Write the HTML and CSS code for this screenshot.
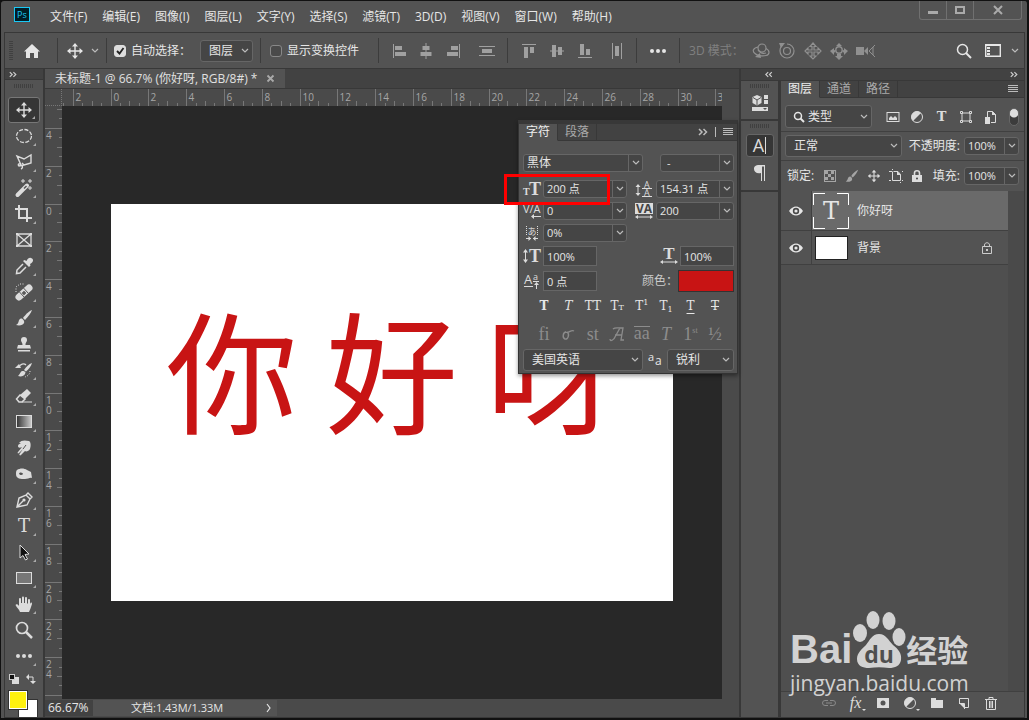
FILE: index.html
```
<!DOCTYPE html>
<html lang="zh-CN">
<head>
    <meta charset="UTF-8"/>
    <meta name="viewport" content="width=device-width,initial-scale=1"/>
    <title>未标题-1 @ 66.7%</title>
    <link rel="stylesheet" href="styles.css">
</head>
<body>
<svg class="defs" width="0" height="0" aria-hidden="true">
    <symbol id="move" viewBox="0 0 18 18"><path d="M9 3v12M3 9h12" fill="none" stroke="currentColor" stroke-width="1.4"/><path d="M9 1l3 3.500H6zM9 17l3-3.500H6zM1 9l3.500-3v6zM17 9l-3.500-3v6z"/></symbol>
    <symbol id="chev" viewBox="0 0 8 6"><path d="M1 1l3 3 3-3" fill="none" stroke="currentColor" stroke-width="1.200"/></symbol>
    <symbol id="eye" viewBox="0 0 14 10"><path d="M0 5c4-6 10-6 14 0-4 6-10 6-14 0z"/><circle cx="7" cy="5" r="3.200" fill="#484848"/><circle cx="7" cy="5" r="1.600"/></symbol>
    <symbol id="burger" viewBox="0 0 10 8"><path d="M0 .5h10M0 2.500h10M0 4.500h10M0 6.500h10" stroke="currentColor" fill="none"/></symbol>
    <symbol id="more" viewBox="0 0 18 6"><circle cx="3" cy="3" r="2"/><circle cx="9" cy="3" r="2"/><circle cx="15" cy="3" r="2"/></symbol>
    <symbol id="right2" viewBox="0 0 10 8"><path d="M1 1l3 3-3 3M5.500 1l3 3-3 3" fill="none" stroke="currentColor" stroke-width="1.500"/></symbol>
    <symbol id="left2" viewBox="0 0 10 8"><path d="M4 1L1 4l3 3M8.500 1l-3 3 3 3" fill="none" stroke="currentColor" stroke-width="1.500"/></symbol>
    <symbol id="half" viewBox="0 0 14 14"><circle cx="7" cy="7" r="5.500" fill="none" stroke="currentColor"/><path d="M11 3A5.600 5.600 0 0 0 3 11z"/></symbol>
</svg>

<div class="app">
    <header class="menubar">
        <svg class="logo" width="16" height="15" viewBox="0 0 16 15"><rect x=".5" y=".5" width="15" height="14" fill="#001d26" stroke="#1ac8f5"/><text x="3" y="11" font-size="9" fill="#1ac8f5">Ps</text></svg>
        <nav class="menu">
            <button>文件(F)</button>
            <button>编辑(E)</button>
            <button>图像(I)</button>
            <button>图层(L)</button>
            <button>文字(Y)</button>
            <button>选择(S)</button>
            <button>滤镜(T)</button>
            <button>3D(D)</button>
            <button>视图(V)</button>
            <button>窗口(W)</button>
            <button>帮助(H)</button>
        </nav>
        <div class="winbtns">
            <button aria-label="最小化"><svg width="10" height="10" viewBox="0 0 10 10"><path d="M0 6h10v3H0z"/></svg></button>
            <button aria-label="最大化"><svg width="10" height="10" viewBox="0 0 10 10"><path d="M1 2h8v6H1z" fill="none" stroke="currentColor" stroke-width="2"/></svg></button>
            <button class="wide" aria-label="关闭"><svg width="10" height="10" viewBox="0 0 10 10"><path d="M1 1l8 8M9 1L1 9" stroke="currentColor" stroke-width="2"/></svg></button>
        </div>
    </header>

    <div class="options">
        <span class="grip-v"></span>
        <button class="home" aria-label="主页"><svg width="16" height="14" viewBox="0 0 16 14"><path d="M8 0l8 7.500h-2V14h-4V9H6v5H2V7.500H0z"/></svg></button>
        <span class="sep"></span>
        <button class="tool-pick" aria-label="移动工具"><svg width="18" height="18"><use href="#move"/></svg><svg width="8" height="6"><use href="#chev"/></svg></button>
        <span class="sep"></span>
        <label class="check"><input type="checkbox" checked>自动选择：</label>
        <select class="sel sel-auto" aria-label="自动选择对象"><option>图层</option></select>
        <span class="sep"></span>
        <label class="check check-show"><input type="checkbox">显示变换控件</label>
        <span class="sep"></span>
        <div class="align">
            <button aria-label="左对齐"><svg width="14" height="16" viewBox="0 0 14 16"><path d="M0 1h1v14H0zM2 3h7v4H2zM2 9h11v4H2z"/></svg></button>
            <button aria-label="水平居中"><svg width="12" height="16" viewBox="0 0 12 16"><path d="M5.500 0h1v16h-1zM2.500 3h7v4h-7zM.5 9h11v4H.5z"/></svg></button>
            <button aria-label="右对齐"><svg width="14" height="16" viewBox="0 0 14 16"><path d="M13 1h1v14h-1zM5 3h7v4H5zM1 9h11v4H1z"/></svg></button>
            <button class="dist" aria-label="垂直分布"><svg width="16" height="12" viewBox="0 0 16 12"><path d="M0 1h16v1H0zM0 10h16v1H0zM3 4h10v4H3z"/></svg></button>
        </div>
        <span class="sep"></span>
        <div class="align align-v">
            <button aria-label="顶对齐"><svg width="14" height="14" viewBox="0 0 14 14"><path d="M0 0h14v1H0zM2 3h4v11H2zM8 3h4v6H8z"/></svg></button>
            <button aria-label="垂直居中"><svg width="14" height="14" viewBox="0 0 14 14"><path d="M0 6.500h14v1H0zM2 1h4v12H2zM8 3h4v8H8z"/></svg></button>
            <button aria-label="底对齐"><svg width="14" height="14" viewBox="0 0 14 14"><path d="M0 13h14v1H0zM2 0h4v11H2zM8 5h4v6H8z"/></svg></button>
            <button class="dist" aria-label="水平分布"><svg width="10" height="16" viewBox="0 0 10 16"><path d="M0 0h1v16H0zM9 0h1v16H9zM3 3h4v10H3z"/></svg></button>
        </div>
        <span class="sep"></span>
        <button class="more" aria-label="更多"><svg width="18" height="6"><use href="#more"/></svg></button>
        <span class="sep"></span>
        <span class="mode3d">3D 模式：</span>
        <div class="icons3d">
            <button disabled aria-label="环绕"><svg width="18" height="16" viewBox="0 0 18 16"><g fill="none" stroke="currentColor" stroke-width="1.200"><circle cx="10" cy="5" r="4"/><path d="M6 4C1 5 0 8 3 10.500c2 2 7 3 11 2 4-1 4-5 0-7M6 7c2 3 5 4 8 3"/></g><path d="M8 10l-5 4 6 1z"/></svg></button>
            <button disabled aria-label="滚动"><svg width="18" height="18" viewBox="0 0 18 18"><g fill="none" stroke="currentColor" stroke-width="1.200"><circle cx="9" cy="9" r="3.500"/><path d="M9 2a7 7 0 1 1-7 7c0-3 1-5 3-6"/></g><path d="M1 1h6L3 6z"/></svg></button>
            <button disabled aria-label="平移"><svg width="18" height="18" viewBox="0 0 18 18"><path d="M9 1l3 3.500h-2v3.500h4V6l3 3-3 3v-2h-4v4h2l-3 3-3-3h2v-4H4v2L1 9l3-3v2h4V4.500H6z" fill="none" stroke="currentColor" stroke-width="1.200"/></svg></button>
            <button disabled aria-label="滑动"><svg width="18" height="18" viewBox="0 0 18 18"><circle cx="9" cy="8" r="3.200" fill="none" stroke="currentColor" stroke-width="1.400"/><path d="M9 1l3 3H6zM0 9l4-3v2l2 .5-2 2.500v2zM18 9l-4-3v2l-2 .5 2 2.500v2zM7 12h4v2h2l-4 4-4-4h2z"/></svg></button>
            <button disabled aria-label="缩放"><svg width="20" height="14" viewBox="0 0 20 14"><path d="M0 3h8v8H0zM8 7l4-4v8z"/><path d="M19 1l-6 6 6 6M17 3v8" fill="none" stroke="currentColor"/></svg></button>
        </div>
        <div class="opt-right">
            <button aria-label="搜索"><svg width="16" height="16" viewBox="0 0 16 16"><circle cx="6.500" cy="6.500" r="5" fill="none" stroke="currentColor" stroke-width="1.500"/><path d="M10 10l5 5" stroke="currentColor" stroke-width="2"/></svg></button>
            <button aria-label="工作区"><svg width="16" height="13" viewBox="0 0 16 13"><path d="M.7.7h14.600v11.600H.7z" fill="none" stroke="currentColor" stroke-width="1.400"/><path d="M1 0h14v2H1zM2 3h3v2H2zM2 6h3v2H2zM2 9h3v2H2z"/></svg></button>
            <button class="ws-arrow" aria-label="工作区菜单"><svg width="8" height="6"><use href="#chev"/></svg></button>
        </div>
    </div>

    <main class="workspace">
        <aside class="toolbar">
            <div class="strip"><svg width="8" height="7"><use href="#right2"/></svg></div>
            <span class="grip"></span>
            <div class="tools">
                <button class="tool active" aria-label="移动"><svg viewBox="0 0 18 18"><use href="#move"/></svg></button>
                <button class="tool" aria-label="椭圆选框"><svg viewBox="0 0 18 18"><ellipse cx="9" cy="9" rx="7.500" ry="6.500" fill="none" stroke="currentColor" stroke-width="1.300" stroke-dasharray="4 1.500"/></svg></button>
                <button class="tool" aria-label="套索"><svg viewBox="0 0 18 18"><path d="M6 12L2 3l7 3 7-4v8l-7 2-5 1c-2-2 1-3 2-1 2 1 2 3 0 4M9 12l-2-2" fill="none" stroke="currentColor" stroke-width="1.400"/></svg></button>
                <button class="tool" aria-label="魔棒"><svg viewBox="0 0 18 18"><path d="M2.500 16L12 6.500" stroke="currentColor" stroke-width="4" stroke-linecap="round"/><path d="M9 9.500l2.500-2.500" stroke="#535353" stroke-width="1.500"/><path d="M8 0v4M6 2h4M15 0v4M13 2h4M15 7v4M13 9h4" stroke="currentColor" stroke-width="1"/></svg></button>
                <button class="tool" aria-label="裁剪"><svg viewBox="0 0 18 18"><path d="M4 0v13h13M0 4h12v13" fill="none" stroke="currentColor" stroke-width="2"/></svg></button>
                <button class="tool plain" aria-label="图框"><svg viewBox="0 0 18 18"><path d="M2 3h14v12H2zM2 3l14 12M16 3L2 15" fill="none" stroke="currentColor" stroke-width="1.300"/><path d="M1 2h2v2H1zM15 2h2v2h-2zM1 14h2v2H1zM15 14h2v2h-2z"/></svg></button>
                <button class="tool" aria-label="吸管"><svg viewBox="0 0 18 18"><path d="M8 7L2 13l-.5 3.500L5 16l6-6" fill="none" stroke="currentColor" stroke-width="1.500"/><path d="M8 4l1.500-1 2 1C13 1 15 0 17 1.500s1 4-2 5.500l.5 1.500L14 10z"/></svg></button>
                <button class="tool" aria-label="修复画笔"><svg viewBox="0 0 18 18"><path d="M4 14L14 5" stroke="currentColor" stroke-width="7" stroke-linecap="round"/><path d="M4.500 9l5 5.500M8.500 5l5 5.500" stroke="#535353"/><path d="M9 8v4M7 10h4" stroke="#535353" stroke-width="1.500"/><path d="M1 9V4l4-3h4" fill="none" stroke="currentColor" stroke-dasharray="1 1.500"/></svg></button>
                <button class="tool" aria-label="画笔"><svg viewBox="0 0 18 18"><path d="M17 1c-3 1-7 5-9 8l2 2c3-3 6-7 7-10z"/><path d="M7 9.500c-3 0-3 2-3.500 3.500S2 15.500 1 16c4 1 7 0 8-2 .5-1 0-2-.5-3z"/></svg></button>
                <button class="tool" aria-label="图章"><svg viewBox="0 0 18 18"><path d="M9 2a3 3 0 0 1 3 3c0 2-1.500 2-1.500 5H15l1 3.500H2L3 10h4.500C7.500 7 6 7 6 5a3 3 0 0 1 3-3zM3 15h12v1.500H3z"/></svg></button>
                <button class="tool" aria-label="历史画笔"><svg viewBox="0 0 18 18"><path d="M17 2c-3 1-6 4-8 7l2 1.500c2.500-2 5-5 6-8.500z"/><path d="M8.500 10C5 10 6 12 3 15c3 1 6 0 7-2l.5-2zM0 7l4-4 2 4z"/><path d="M4 6c1-3 5-4 7-2" fill="none" stroke="currentColor" stroke-width="1.300"/><path d="M15 10c0 3-2 5-5 6" fill="none" stroke="currentColor" stroke-dasharray="1 1.500"/></svg></button>
                <button class="tool" aria-label="橡皮擦"><svg viewBox="0 0 18 18"><path d="M12 2l4 4-6 6-5-4z"/><path d="M5 8l5 4-3 3H4l-2.500-3z" fill="none" stroke="currentColor" stroke-width="1.500"/><path d="M7 15h10" stroke="currentColor"/></svg></button>
                <button class="tool" aria-label="渐变"><svg viewBox="0 0 18 18"><defs><linearGradient id="g1"><stop offset="0" stop-color="#333"/><stop offset="1" stop-color="#ccc"/></linearGradient></defs><rect x="1.500" y="2.500" width="15" height="12" fill="url(#g1)" stroke="currentColor"/></svg></button>
                <button class="tool" aria-label="涂抹"><svg viewBox="0 0 18 18"><path d="M4 4c2-3 6-3 10-2 2 1 2 5 1 8-1 2-4 3-5 2l-4 4c-1 1-2 0-1.500-1L8 10l-4 4c-1 1-2 0-1-1l4-5c-2 1-4 1-4-1s2-2 3-3z"/><path d="M11 6l-3 4" stroke="#535353"/></svg></button>
                <button class="tool" aria-label="减淡"><svg viewBox="0 0 18 18"><path d="M2 5c3-2 7-2 10 0l4 2 1 6c-2-1-4 1-7 1-4 0-9 0-9-5 0-2 0-3 1-4z"/><path d="M4 8.500c1-2 4-1 4 .5-1 1.500-3 1.500-4-.5z" fill="#535353"/></svg></button>
                <button class="tool" aria-label="钢笔"><svg viewBox="0 0 18 18"><path d="M2 16l2-9 7-3 4 4-3 6zM2 16l6-6M11 4l2-2 4 4-2 2" fill="none" stroke="currentColor" stroke-width="1.400"/><circle cx="9" cy="9" r="1.600"/></svg></button>
                <button class="tool" aria-label="文字"><span class="tee type">T</span></button>
                <button class="tool" aria-label="路径选择"><svg viewBox="0 0 18 18"><path d="M5 2l9 9-4 .5 2.500 4.500-2 1L8 12.500 5 15z" fill="#111" stroke="currentColor"/></svg></button>
                <button class="tool" aria-label="矩形"><svg viewBox="0 0 18 18"><rect x="1.500" y="3.500" width="15" height="11" fill="#777" stroke="currentColor"/></svg></button>
                <button class="tool" aria-label="抓手"><svg viewBox="0 0 18 18"><path d="M5 17c-1-3-3-4-4.500-7C1 8.500 3 9 4 11V4c0-1.500 2-1.500 2 0v4h1V2.500c0-1.500 2-1.500 2 0V8h1V3c0-1.500 2-1.500 2 0v5.500h1V5c0-1.500 2-1.500 2 0v4l.5-1c1-1 1.500 0 1.500 1-1 3-2 6-3 8z"/></svg></button>
                <button class="tool plain" aria-label="缩放"><svg viewBox="0 0 18 18"><circle cx="7" cy="7" r="5.500" fill="none" stroke="currentColor" stroke-width="1.700"/><path d="M11 11l6 6" stroke="currentColor" stroke-width="2.500"/></svg></button>
                <button class="tool" aria-label="编辑工具栏"><svg viewBox="0 0 18 18"><use href="#more" y="6" width="18" height="6"/></svg></button>
            </div>
            <div class="mini">
                <button aria-label="默认颜色"><svg width="10" height="10" viewBox="0 0 10 10"><path d="M3 3h7v7H3z"/><rect x=".5" y=".5" width="5" height="5" fill="#111" stroke="#ccc"/></svg></button>
                <button aria-label="切换颜色"><svg width="10" height="10" viewBox="0 0 10 10"><path d="M2 3h5v6" fill="none" stroke="currentColor"/><path d="M0 3l3-3v6zM7 10L4 7h6z"/></svg></button>
            </div>
            <div class="swatches">
                <button class="bg" aria-label="背景色"></button>
                <button class="fg" aria-label="前景色"></button>
            </div>
        </aside>

        <section class="doc">
            <div class="doctabs">
                <div class="doctab">未标题-1 @ 66.7% (你好呀, RGB/8#) *<button aria-label="关闭文档"><svg width="7" height="7" viewBox="0 0 7 7"><path d="M.5.5l6 6M6.500.5l-6 6" stroke="currentColor" stroke-width="1.800"/></svg></button></div>
            </div>
            <div class="view">
                <div class="corner"></div>
                <svg class="ruler-h" id="rulerH"></svg>
                <svg class="ruler-v" id="rulerV"></svg>
                <div class="stage">
                    <div class="page"><span>你</span><span>好</span><span>呀</span></div>
                </div>
                <div class="scroll"></div>
            </div>
            <footer class="status">
                <span class="zoom">66.67%</span>
                <span class="info">文档:1.43M/1.33M</span>
                <button aria-label="状态菜单"><svg width="6" height="10" viewBox="0 0 6 10"><path d="M1 1l3 4-3 4" fill="none" stroke="currentColor" stroke-width="1.200"/></svg></button>
            </footer>

            <div class="char-panel">
                <div class="tabs">
                    <button class="tab on">字符</button>
                    <button class="tab">段落</button>
                    <span class="tab-tools"><svg width="10" height="8"><use href="#right2"/></svg><i></i><svg width="10" height="8"><use href="#burger"/></svg></span>
                </div>
                <div class="char-body">
                    <div class="row first">
                        <div class="combo family"><input aria-label="字体" value="黑体"><button aria-label="字体列表"><svg width="8" height="6"><use href="#chev"/></svg></button></div>
                        <div class="combo face"><input aria-label="字体样式" value="-"><button aria-label="样式列表"><svg width="8" height="6"><use href="#chev"/></svg></button></div>
                    </div>
                    <div class="row">
                        <svg class="lead" viewBox="0 0 18 16"><text class="tee" x="0" y="14" font-size="10">T</text><text class="tee" x="6" y="14" font-size="18">T</text></svg>
                        <div class="combo"><input aria-label="字号" value="200 点"><button aria-label="字号列表"><svg width="8" height="6"><use href="#chev"/></svg></button></div>
                        <svg class="lead second" viewBox="0 0 18 16"><path d="M3 5v8M7 7.500h10M7 15.500h10" stroke="currentColor"/><path d="M3 3l2.500 3h-5zM3 15l2.500-3h-5z"/><text x="9" y="7" font-size="9">A</text><text x="9" y="15" font-size="9">A</text></svg>
                        <div class="combo wide"><input aria-label="行距" value="154.31 点"><button aria-label="行距列表"><svg width="8" height="6"><use href="#chev"/></svg></button></div>
                    </div>
                    <div class="row">
                        <svg class="lead" viewBox="0 0 18 16"><text x="0" y="10" font-size="11">V/A</text><path d="M10 13.500h8" stroke="currentColor"/><path d="M8 13.500l3-2.500v5z"/></svg>
                        <div class="combo"><input aria-label="字距微调" value="0"><button aria-label="微调列表"><svg width="8" height="6"><use href="#chev"/></svg></button></div>
                        <svg class="lead second" viewBox="0 0 18 16"><path d="M0 0h18v11H0z"/><text x="9" y="10" text-anchor="middle" font-size="12" font-weight="bold" fill="#444">VA</text><path d="M2 14h14" stroke="currentColor"/><path d="M0 14l3-2v4zM18 14l-3-2v4z"/></svg>
                        <div class="combo wide"><input aria-label="字距" value="200"><button aria-label="字距列表"><svg width="8" height="6"><use href="#chev"/></svg></button></div>
                    </div>
                    <div class="row">
                        <svg class="lead" viewBox="0 0 18 16"><text x="9" y="10" text-anchor="middle" font-size="9">あ</text><path d="M3.500 1v9M14.500 1v9" stroke="currentColor" stroke-dasharray="1 1"/><path d="M3 13.500h5M10 13.500h5" stroke="currentColor"/><path d="M8 13.500L5.500 11v5zM10 13.500l2.500-2.500v5z"/></svg>
                        <div class="combo"><input aria-label="比例间距" value="0%"><button aria-label="比例列表"><svg width="8" height="6"><use href="#chev"/></svg></button></div>
                    </div>
                    <div class="row">
                        <svg class="lead" viewBox="0 0 18 16"><text class="tee" x="6" y="14" font-size="18">T</text><path d="M2.500 3v10" stroke="currentColor"/><path d="M2.500 1L5 4.500H0zM2.500 15L5 11.500H0z"/></svg>
                        <input class="field" aria-label="垂直缩放" value="100%">
                        <svg class="lead last" viewBox="0 0 18 16"><text class="tee" x="9" y="11" text-anchor="middle" font-size="17">T</text><path d="M2 14h14" stroke="currentColor"/><path d="M0 14l3-2v4zM18 14l-3-2v4z"/></svg>
                        <input class="field" aria-label="水平缩放" value="100%">
                    </div>
                    <div class="row">
                        <svg class="lead" viewBox="0 0 18 16"><text x="1" y="11" font-size="13">A</text><text x="10" y="7" font-size="9">a</text><path d="M1 13.500h9M10 8.500h6M13.500 11v5" stroke="currentColor"/><path d="M13.500 9l2.500 3h-5z"/></svg>
                        <input class="field" aria-label="基线偏移" value="0 点">
                        <span class="color-label">颜色：</span>
                        <button class="color" aria-label="文本颜色"></button>
                    </div>
                    <div class="styles">
                        <button class="b" aria-label="仿粗体">T</button>
                        <button class="it" aria-label="仿斜体">T</button>
                        <button aria-label="全部大写">TT</button>
                        <button aria-label="小型大写">T<small>T</small></button>
                        <button aria-label="上标">T<sup>1</sup></button>
                        <button aria-label="下标">T<sub>1</sub></button>
                        <button class="ul" aria-label="下划线">T</button>
                        <button class="st" aria-label="删除线">T</button>
                    </div>
                    <div class="styles opentype">
                        <button disabled>fi</button>
                        <button class="it" disabled aria-label="上下文替代字"><svg width="14" height="14" viewBox="0 0 14 14"><path d="M5 5c-3 0-4 6-1 7s5-5 2-7M4 5c4 2 6-3 9-1" fill="none" stroke="currentColor" stroke-width="1.400"/></svg></button>
                        <button disabled>st</button>
                        <button class="it" disabled aria-label="花饰字"><svg width="16" height="16" viewBox="0 0 16 16"><path d="M1 13c0 3 4 1 5-2l5-9h3l-2 12h3M4 3c2-2 5-1 8-1M6 9h7" fill="none" stroke="currentColor" stroke-width="1.300"/></svg></button>
                        <button class="arrow" disabled>aa</button>
                        <button class="it" disabled>T</button>
                        <button disabled>1<sup>st</sup></button>
                        <button disabled>½</button>
                    </div>
                    <div class="row lang">
                        <select class="sel" aria-label="语言"><option>美国英语</option></select>
                        <svg width="14" height="14" viewBox="0 0 14 14"><text x="0" y="8" font-size="11">a</text><text x="7" y="12" font-size="12">a</text></svg>
                        <select class="sel aa" aria-label="消除锯齿"><option>锐利</option></select>
                    </div>
                </div>
            </div>
            <div class="highlight"></div>
        </section>

        <aside class="dock">
            <div class="strip dock-strip"><svg width="8" height="7"><use href="#left2"/></svg><svg width="8" height="7"><use href="#right2"/></svg></div>
            <div class="dock-cols">
                <div class="icon-dock">
                    <div class="dock-group">
                        <span class="grip"></span>
                        <button aria-label="属性"><svg width="16" height="18" viewBox="0 0 16 18"><path d="M5 1l4.500 2v6L5 11.500.5 9V3z"/><path d="M1 3.500L5 6l4-2.500M5 6v5" fill="none" stroke="#535353"/><path d="M12 1h4v4h-4zM12 6h4v4h-4zM0 13h16v4H0z"/><path d="M11 14h4l-2 2z" fill="#535353"/></svg></button>
                    </div>
                    <div class="dock-group">
                        <span class="grip"></span>
                        <button class="on" aria-label="字符面板"><span class="letter">A</span></button>
                        <button aria-label="段落面板"><svg width="14" height="16" viewBox="0 0 14 16"><path d="M12 0v16h-1V1.500H9V16H8V8C4 9 1 7 1 4s2-4 5-4z"/></svg></button>
                    </div>
                </div>
                <div class="layers">
                    <div class="tabs">
                        <button class="tab on">图层</button>
                        <button class="tab">通道</button>
                        <button class="tab">路径</button>
                        <span class="tab-tools"><svg width="10" height="8"><use href="#burger"/></svg></span>
                    </div>
                    <div class="lrow filter">
                        <div class="kind"><svg width="12" height="12" viewBox="0 0 12 12"><circle cx="5" cy="5" r="3.500" fill="none" stroke="currentColor" stroke-width="1.500"/><path d="M7.500 7.500L11 11" stroke="currentColor" stroke-width="2"/></svg><select aria-label="筛选类型"><option>类型</option></select></div>
                        <div class="filter-icons">
                            <button aria-label="像素图层"><svg width="14" height="14" viewBox="0 0 14 14"><rect x="1" y="2.500" width="12" height="9" fill="none" stroke="currentColor"/><path d="M3 10V8l2-2 2 2 2-2 2 2v2z"/></svg></button>
                            <button aria-label="调整图层"><svg width="14" height="14"><use href="#half"/></svg></button>
                            <button class="tee" aria-label="文字图层">T</button>
                            <button aria-label="形状图层"><svg width="14" height="14" viewBox="0 0 14 14"><path d="M3 3h8v8H3z" fill="none" stroke="currentColor"/><path d="M1.500 1.500h2v2h-2zM10.500 1.500h2v2h-2zM1.500 10.500h2v2h-2zM10.500 10.500h2v2h-2z" fill="#535353" stroke="currentColor"/></svg></button>
                            <button aria-label="智能对象"><svg width="14" height="14" viewBox="0 0 14 14"><path d="M4.500 7V1.500h5l3 3v8H8" fill="none" stroke="currentColor"/><path d="M9 1v4h4zM2 7h5v7H2z"/></svg></button>
                        </div>
                        <label class="toggle"><input type="checkbox" checked aria-label="图层过滤"></label>
                    </div>
                    <div class="lrow mode">
                        <select class="sel" aria-label="混合模式"><option>正常</option></select>
                        <label for="opacity">不透明度:</label>
                        <div class="combo pct"><input id="opacity" value="100%"><button aria-label="不透明度滑块"><svg width="8" height="6"><use href="#chev"/></svg></button></div>
                    </div>
                    <div class="lrow locks">
                        <span>锁定:</span>
                        <div class="lock-icons">
                            <button aria-label="锁定透明像素"><svg width="14" height="14" viewBox="0 0 14 14" opacity=".6"><rect x="1.500" y="1.500" width="11" height="11" fill="none" stroke="currentColor"/><path d="M2 2h3v3H2zM8 2h3v3H8zM5 5h3v3H5zM2 8h3v3H2zM8 8h3v3H8z"/></svg></button>
                            <button aria-label="锁定像素"><svg width="14" height="14" viewBox="0 0 18 18" opacity=".6"><path d="M17 1c-3 1-7 5-9 8l2 2c3-3 6-7 7-10zM7 9.500c-3 0-3 2-3.500 3.500S2 15.500 1 16c4 1 7 0 8-2 .5-1 0-2-.5-3z"/></svg></button>
                            <button aria-label="锁定位置"><svg width="14" height="14"><use href="#move"/></svg></button>
                            <button aria-label="锁定画板"><svg width="14" height="14" viewBox="0 0 14 14"><path d="M0 2.500h3M4.500 2.500H9l2.500 3v6h-8v-9M11.500 13v1M3.500 0v1M0 11.500h2M13 11.500h1M13 2.500h1" fill="none" stroke="currentColor"/><path d="M8 2v4h4z"/></svg></button>
                            <button aria-label="全部锁定"><svg width="12" height="14" viewBox="0 0 12 14"><path d="M1 6h10v7H1z"/><path d="M3.500 6V4c0-3 5-3 5 0v2" fill="none" stroke="currentColor" stroke-width="1.600"/><circle cx="6" cy="9.500" r="1" fill="#444"/></svg></button>
                        </div>
                        <label for="fill">填充:</label>
                        <div class="combo pct"><input id="fill" value="100%"><button aria-label="填充滑块"><svg width="8" height="6"><use href="#chev"/></svg></button></div>
                    </div>
                    <div class="list-wrap">
                        <ul class="list">
                            <li class="layer selected">
                                <button class="vis" aria-label="可见性"><svg width="14" height="10"><use href="#eye"/></svg></button>
                                <span class="thumb text"><svg width="36" height="36" viewBox="0 0 36 36"><path d="M.5 12V.5H12M24 .5h11.500V12M35.500 24v11.500H24M12 35.500H.5V24" fill="none" stroke="#fff"/><text class="thin" x="18" y="26" text-anchor="middle" font-size="24">T</text></svg></span>
                                <span>你好呀</span>
                            </li>
                            <li class="layer">
                                <button class="vis" aria-label="可见性"><svg width="14" height="10"><use href="#eye"/></svg></button>
                                <span class="thumb white"></span>
                                <span>背景</span>
                                <svg class="locked" width="12" height="14" viewBox="0 0 12 14"><path d="M1.500 5.500h9v7h-9zM3.500 5.500V4c0-3 5-3 5 0v1.500" fill="none" stroke="currentColor"/><path d="M5 8h2v2H5z"/></svg>
                            </li>
                        </ul>
                        <div class="scroll"></div>
                    </div>
                    <div class="layer-foot">
                        <button disabled aria-label="链接"><svg width="14" height="14" viewBox="0 0 14 14"><path d="M6 4.500H3a2.500 2.500 0 0 0 0 5h3M8 4.500h3a2.500 2.500 0 0 1 0 5H8M4 7h6" fill="none" stroke="currentColor"/></svg></button>
                        <button class="fx drop" aria-label="图层样式">fx</button>
                        <button aria-label="蒙版"><svg width="14" height="14" viewBox="0 0 14 14"><path d="M1 2h12v10H1z"/><circle cx="7" cy="7" r="2.500" fill="#535353"/></svg></button>
                        <button class="drop" aria-label="调整"><svg width="14" height="14"><use href="#half"/></svg></button>
                        <button aria-label="新建组"><svg width="14" height="14" viewBox="0 0 14 14"><path d="M1 2h5v2h7v8H1z"/></svg></button>
                        <button aria-label="新建图层"><svg width="14" height="14" viewBox="0 0 14 14"><path d="M2.500 7V2.500h9v9H8M2 7.500h5.500V13" fill="none" stroke="currentColor"/><path d="M3 8h5v5z"/></svg></button>
                        <button aria-label="删除"><svg width="14" height="14" viewBox="0 0 14 14"><path d="M2.500 4v9.500h9V4M1 3.500h12M5 3V1.500h4V3M5.500 5v7M7 5v7M8.500 5v7" fill="none" stroke="currentColor"/></svg></button>
                    </div>
                </div>
            </div>
        </aside>
    </main>

    <div class="watermark">
        <div class="brand">
            <span class="bai">Bai</span>
            <svg width="54" height="60" viewBox="0 0 54 60"><ellipse cx="8" cy="23" rx="7" ry="9"/><ellipse cx="21" cy="10" rx="6.500" ry="9"/><ellipse cx="37" cy="11" rx="6.500" ry="9"/><ellipse cx="47" cy="27" rx="6.500" ry="9"/><path d="M27 24c7 0 9 6 14 11 5 4 9 8 8 15-1 6-6 8-12 8-7-1-13-1-20 0-6 0-12-2-12-9 0-6 5-10 9-14 4-5 6-11 13-11z"/><text x="27" y="53" text-anchor="middle" font-size="23" font-weight="bold" fill="#4f4f4f">du</text></svg>
            <span class="jy">经验</span>
        </div>
        <div class="site">jingyan.baidu.com</div>
    </div>
</div>

<script>
    const NS = 'http://www.w3.org/2000/svg';
    const STEP = 37.8;  // 2 cm at 66.67%
    function add(svg, name, attrs, text) {
        const el = document.createElementNS(NS, name);
        for (const k in attrs) el.setAttribute(k, attrs[k]);
        if (text) el.textContent = text;
        svg.appendChild(el);
    }
    function ruler(id, origin, vertical) {
        const svg = document.getElementById(id);
        const len = vertical ? svg.clientHeight : svg.clientWidth;
        for (let q = -16; origin + q * STEP / 4 < len; q++) {
            const p = Math.floor(origin + q * STEP / 4) + 0.5;
            if (p < 0) continue;
            const size = q % 4 === 0 ? 17 : (q % 2 === 0 ? 5 : 3);
            add(svg, 'line', vertical
                ? {x1: 17 - size, x2: 17, y1: p, y2: p}
                : {x1: p, x2: p, y1: 17 - size, y2: 17});
            if (q % 4) continue;
            const label = String(Math.abs(q / 2));
            if (vertical) {
                if (p + 12 > len) continue;
                [...label].forEach((c, i) => add(svg, 'text', {x: 1, y: p + 10 + i * 10}, c));
            } else {
                add(svg, 'text', {x: p + 2, y: 12}, label);
            }
        }
    }
    // zero point sits on the page's top left corner
    const page = document.querySelector('.page').getBoundingClientRect();
    const stage = document.querySelector('.stage').getBoundingClientRect();
    ruler('rulerH', page.left - stage.left, false);
    ruler('rulerV', page.top - stage.top, true);
</script>
</body>
</html>
```
FILE: styles.css
```
* { box-sizing: border-box; }
body {
    margin: 0;
    font: 12px/16px "Open Sans", "Noto Sans CJK SC", sans-serif;
    color: #e6e6e6;
    background: #111;
}
button, input, select { font: inherit; color: inherit; margin: 0; padding: 0; border: 0; background: none; }
button { display: flex; align-items: center; justify-content: center; flex: none; }
svg { display: block; flex: none; fill: currentColor; overflow: visible; }
svg line { stroke: #777; }
.defs { position: absolute; }
.tee { font-family: "DejaVu Serif", serif; }
.thin { font-family: "DejaVu Serif", serif; }
svg .tee { font-family: "Liberation Serif", serif; font-weight: bold; }

.app {
    position: relative;
    display: flex;
    flex-direction: column;
    height: 100vh;
    overflow: hidden;
    background: #535353;
    border: solid #111;
    border-width: 1px 2px 2px 1px;
    border-radius: 4px 4px 0 0;
}

/* menu bar */
.menubar { display: flex; flex: none; height: 31px; padding: 0 5px 0 13px; }
.logo { margin-top: 6px; }
.menu { display: flex; flex: 1; gap: 15px; margin-left: 20px; align-items: center; white-space: nowrap; }
.winbtns { display: flex; height: 19px; color: #aaa; border: 1px solid #707070; border-top: 0; border-radius: 0 0 3px 3px; }
.winbtns button { width: 27px; border-right: 1px solid #707070; }
.winbtns .wide { width: 47px; border: 0; }

/* options bar */
.options {
    display: flex;
    flex: none;
    align-items: center;
    height: 36px;
    margin: 0 2px 0 3px;
    padding-left: 4px;
    border: 1px solid #383838;
    border-bottom: 0;
    white-space: nowrap;
}
.grip-v { width: 4px; height: 20px; background: repeating-linear-gradient(#404040 0 1px, transparent 1px 2px); }
.home { width: 44px; padding-right: 6px; }
.sep { flex: none; width: 1px; height: 25px; background: #3c3c3c; }
.tool-pick { width: 48px; gap: 7px; }
.tool-pick svg + svg { color: #bbb; }
.check { display: flex; align-items: center; gap: 5px; margin-left: 7px; }
.check input { appearance: none; width: 12px; height: 12px; border: 1px solid #888; border-radius: 3px; background: #4a4a4a; }
.check input:checked {
    border-color: #ddd;
    background: #ddd url("data:image/svg+xml,%3Csvg xmlns='http://www.w3.org/2000/svg' viewBox='0 0 10 10'%3E%3Cpath d='M2 5l2.500 2.500L8.500 2' fill='none' stroke='%23222' stroke-width='1.800'/%3E%3C/svg%3E");
}
.check-show { margin: 0 19px 0 9px; }
.sel {
    appearance: none;
    height: 22px;
    padding: 0 16px 0 8px;
    border: 1px solid #666;
    border-radius: 3px;
    background: #454545 url("data:image/svg+xml,%3Csvg xmlns='http://www.w3.org/2000/svg' width='8' height='6'%3E%3Cpath d='M1 1l3 3 3-3' fill='none' stroke='%23bbb' stroke-width='1.200'/%3E%3C/svg%3E") no-repeat right 3px center;
}
.sel-auto { width: 53px; margin: 0 7px 0 9px; }
.align { display: flex; align-items: center; width: 128px; padding: 0 12px 0 14px; justify-content: space-between; color: #a0a0a0; }
.align .dist { margin-left: 6px; }
.align-v { padding: 0 14px; }
.more { width: 42px; }
.mode3d { margin-left: 9px; color: #808080; }
.icons3d { display: flex; align-items: center; gap: 8px; margin-left: 8px; color: #909090; }
.opt-right { display: flex; align-items: center; gap: 13px; margin-left: auto; padding-right: 5px; }
.opt-right .ws-arrow { margin-left: -3px; color: #bbb; }

/* workspace */
.workspace { display: flex; flex: 1; min-height: 0; gap: 2px; margin: 0 2px 0 3px; padding: 1px; background: #383838; }
.strip { display: flex; flex: none; align-items: center; height: 11px; padding: 0 4px; background: #424242; color: #ccc; }
.grip { display: block; flex: none; width: 20px; height: 4px; margin: 4px auto 0; background: repeating-linear-gradient(90deg, #404040 0 1px, transparent 1px 2px); }

.toolbar { display: flex; flex-direction: column; width: 38px; overflow: hidden; background: #535353; color: #dcdcdc; }
.toolbar .strip { border-bottom: 1px solid #383838; }
.tools { margin-top: 9px; }
.tool { position: relative; width: 32px; height: 26px; margin-left: 3px; border-radius: 3px; }
.tool svg { width: 18px; height: 18px; }
.tool.active { background: #363636; border: 1px solid #777; }
.tool::after { content: ""; position: absolute; right: 4px; bottom: 3px; border: solid transparent; border-width: 3px 0 0 3px; border-right: 0; border-bottom: 3px solid #aaa; }
.tool.plain::after { display: none; }
.type { font-size: 18px; line-height: 24px; }
.mini { display: flex; gap: 7px; margin: 5px 0 0 4px; }
.swatches { position: relative; flex: none; height: 30px; margin-top: 4px; }
.swatches button { position: absolute; width: 20px; height: 20px; border: 1px solid #333; }
.fg { left: 3px; top: 2px; background: #fff20d; box-shadow: inset 0 0 0 1px #fff; }
.bg { left: 13px; top: 11px; background: #fff; }

/* document */
.doc { position: relative; display: flex; flex-direction: column; flex: 1; min-width: 0; background: #4a4a4a; }
.doctabs { flex: none; height: 20px; background: #424242; border-bottom: 1px solid #383838; }
.doctab { display: inline-flex; align-items: center; gap: 10px; height: 19px; padding: 0 11px 0 10px; background: #535353; color: #e0e0e0; white-space: nowrap; }
.doctab button { color: #aaa; }
.view { display: grid; flex: 1; min-height: 0; grid-template: 17px minmax(0, 1fr) / 17px minmax(0, 1fr) 17px; }
.corner { border-right: 1px dotted #777; border-bottom: 1px dotted #777; }
.ruler-h, .ruler-v { width: 100%; height: 100%; overflow: hidden; fill: #a6a6a6; font-size: 10px; }
.ruler-h { grid-column: 2; }
.ruler-v { grid-row: 2; grid-column: 1; width: 17px; }
.stage { grid-area: 2 / 2; display: flex; align-items: center; justify-content: center; background: #282828; }
.view .scroll { grid-row: 1 / 3; grid-column: 3; }
.page {
    display: flex;
    align-items: center;
    gap: 28px;
    width: 562px;
    height: 397px;
    padding: 0 0 71px 55px;
    background: #fff;
    color: #c81414;
    font: 400 132px/132px "Noto Sans CJK SC", sans-serif;
    white-space: nowrap;
}
.status { display: flex; flex: none; align-items: center; height: 18px; background: #4a4a4a; }
.zoom { width: 48px; padding-left: 3px; background: #424242; }
.info { width: 168px; padding-left: 38px; background: #535353; font-size: 11px; }
.status button { width: 16px; height: 16px; background: #535353; }

/* panel tabs */
.tabs { display: flex; flex: none; height: 17px; background: #424242; }
.tab { padding: 0 7px; color: #aaa; border-right: 1px solid #383838; border-bottom: 1px solid #383838; }
.tab.on { background: #535353; color: #eee; border-bottom-color: #535353; }
.tab-tools { display: flex; flex: 1; align-items: center; justify-content: flex-end; gap: 7px; padding-right: 6px; color: #bbb; border-bottom: 1px solid #383838; }
.char-panel .tab-tools { padding-right: 4px; }
.tab-tools i { width: 1px; height: 10px; background: #bbb; }

/* character panel */
.char-panel { position: absolute; top: 51px; right: 1px; width: 220px; border: 1px solid #333; border-top: 4px solid #383838; background: #535353; box-shadow: 0 2px 4px #0006; }
.char-body { padding: 13px 3px 2px 4px; }
.row { display: flex; align-items: center; min-height: 18px; margin-bottom: 4px; font-size: 11px; }
.row.first { justify-content: space-between; margin-bottom: 8px; }
.combo { display: flex; width: 84px; height: 18px; border: 1px solid #666; border-radius: 3px; background: #454545; }
.combo input { flex: 1; min-width: 0; padding-left: 3px; }
.combo button { width: 14px; border-left: 1px solid #666; color: #bbb; }
.combo.family { width: 120px; font-size: 12px; }
.combo.face { width: 74px; }
.combo.face input { padding-left: 6px; }
.combo.wide { width: 78px; }
.lead { width: 18px; height: 16px; margin-right: 2px; color: #dcdcdc; }
.lead.second { margin-left: 8px; margin-right: 3px; }
.lead.last { margin-left: auto; }
.field { width: 54px; height: 20px; padding-left: 3px; border: 1px solid #666; background: #454545; }
.color-label { margin-left: auto; font-size: 12px; color: #ccc; }
.color { width: 56px; height: 22px; border: 1px solid #333; background: #c81414; }
.styles { display: flex; justify-content: space-between; margin: 5px 7px 0 9px; font: 12px/16px "DejaVu Serif", serif; }
.styles button { width: 24px; height: 18px; }
.styles small, .styles sup, .styles sub { font-size: 8px; line-height: 10px; }
.styles small { padding-top: 3px; }
.styles sup { margin-bottom: 6px; }
.styles sub { margin-top: 8px; }
.b { font-weight: bold; }
.it { font-style: italic; }
.ul { text-decoration: underline; text-underline-offset: 3px; }
.st { text-decoration: line-through; }
.opentype { margin-top: 10px; color: #8c8c8c; font: 18px/18px "Liberation Serif", serif; }
.arrow { flex-direction: column; line-height: 12px; }
.arrow::before { content: ""; width: 16px; height: 1px; margin-top: -3px; background: #8c8c8c; }
.lang { margin: 6px 0 0; justify-content: space-between; }
.lang .sel { width: 120px; font-size: 12px; }
.lang .aa { width: 67px; }
.highlight { position: absolute; top: 105px; right: 129px; width: 106px; height: 31px; border: 3px solid #f00; }

/* right dock */
.dock { display: flex; flex-direction: column; width: 283px; }
.dock-strip { justify-content: space-between; padding: 0 6px 0 24px; }
.dock-cols { display: flex; flex: 1; min-height: 0; gap: 3px; margin-top: 1px; }
.icon-dock { width: 37px; background: #535353; color: #dcdcdc; }
.dock-group { padding-bottom: 7px; border-bottom: 2px solid #383838; }
.dock-group .grip { margin: 0 auto 6px; }
.dock-group:first-child { padding-top: 3px; }
.dock-group + .dock-group { padding-top: 3px; padding-bottom: 1px; }
.dock-group button { width: 28px; height: 18px; margin: 0 auto 7px; }
.dock-group:first-child button { margin-bottom: 0; }
.dock-group .on { height: 23px; background: #363636; border: 1px solid #666; border-radius: 3px; }
.letter { padding-right: 1px; border-right: 1px solid #dcdcdc; font-size: 18px; line-height: 17px; }

.layers { display: flex; flex-direction: column; flex: 1; min-width: 0; background: #4f4f4f; }
.lrow { display: flex; flex: none; align-items: center; padding: 0 5px 0 4px; background: #535353; border-bottom: 1px solid #404040; }
.filter { height: 34px; padding-top: 4px; }
.kind { display: flex; align-items: center; width: 87px; height: 23px; padding-left: 7px; gap: 3px; border: 1px solid #666; border-radius: 3px; background: #454545; }
.kind select {
    flex: 1;
    appearance: none;
    background: url("data:image/svg+xml,%3Csvg xmlns='http://www.w3.org/2000/svg' width='8' height='6'%3E%3Cpath d='M1 1l3 3 3-3' fill='none' stroke='%23bbb' stroke-width='1.200'/%3E%3C/svg%3E") no-repeat right 3px center;
}
.filter-icons { display: flex; flex: 1; justify-content: space-between; padding: 0 12px 0 14px; color: #dcdcdc; }
.filter-icons .tee { width: 14px; font-size: 13px; font-weight: bold; }
.toggle { display: flex; }
.toggle input { appearance: none; width: 10px; height: 18px; border: 1px solid #666; border-radius: 5px; background: radial-gradient(circle at 4px 4px, #ddd 4px, #3c3c3c 5px); }
.mode { height: 29px; }
.mode .sel { width: 117px; }
.mode label, .locks label { margin: 0 4px 0 auto; }
.pct { width: 55px; font-size: 11px; }
.locks { height: 30px; padding-left: 6px; border: 0; }
.lock-icons { display: flex; align-items: center; gap: 8px; margin-left: 9px; color: #dcdcdc; }
.list-wrap { display: flex; flex: 1; min-height: 0; }
.list { flex: 1; margin: 0; padding: 0; list-style: none; }
.list-wrap .scroll { width: 16px; background: #4a4a4a; }
.layer { display: flex; align-items: center; height: 34px; padding-right: 15px; background: #535353; border-bottom: 1px solid #404040; }
.layer.selected { height: 40px; background: linear-gradient(90deg, #535353 30px, #6a6a6a 30px); }
.vis { width: 31px; height: 100%; border-right: 1px solid #404040; }
.thumb { display: flex; flex: none; margin: 0 8px 0 1px; }
.white { width: 33px; height: 24px; margin: 0 9px 0 3px; border: 1px solid #222; background: #fff; }
.locked { margin-left: auto; color: #ccc; }
.layer-foot { display: flex; flex: none; justify-content: center; gap: 13px; height: 26px; padding: 0 0 3px 14px; background: #535353; border-top: 1px solid #404040; color: #dcdcdc; }
.layer-foot button { width: 14px; }
.layer-foot button:disabled { color: #8a8a8a; }
.fx { font: italic 16px/16px "Liberation Serif", serif; }
.drop { position: relative; }
.drop::after { content: ""; position: absolute; right: -3px; bottom: 1px; border: 2px solid transparent; border-top-color: #dcdcdc; }

/* watermark over the lower right corner */
.watermark { position: absolute; right: 55px; bottom: 22px; width: 182px; color: #d2d2d2; pointer-events: none; }
.brand { display: flex; align-items: flex-end; }
.bai { font: bold 40px/42px "Liberation Sans", sans-serif; }
.jy { font: bold 31px/42px "Noto Sans CJK SC", sans-serif; }
.site { font-size: 21px; line-height: 26px; white-space: nowrap; }
```
